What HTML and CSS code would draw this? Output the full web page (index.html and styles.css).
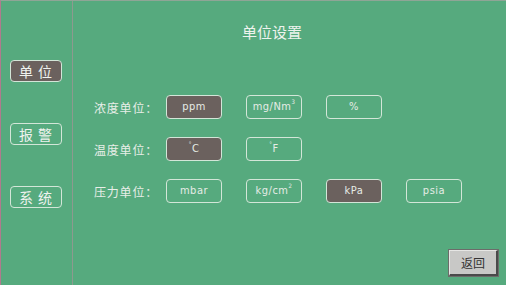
FILE: index.html
```html
<!DOCTYPE html>
<html lang="zh">
<head>
<meta charset="utf-8">
<link rel="stylesheet" href="styles.css">
</head>
<body>
<div class="screen">
  <nav class="side">
    <div class="nav-btn active">单&nbsp;位</div>
    <div class="nav-btn">报&nbsp;警</div>
    <div class="nav-btn">系&nbsp;统</div>
  </nav>
  <main class="main">
    <h1 class="title">单位设置</h1>
    <div class="rows">
      <div class="row">
        <span class="label">浓度单位：</span>
        <span class="opt sel">ppm</span>
        <span class="opt">mg/Nm<sup>3</sup></span>
        <span class="opt">%</span>
      </div>
      <div class="row">
        <span class="label">温度单位：</span>
        <span class="opt sel"><sup>°</sup>C</span>
        <span class="opt"><sup>°</sup>F</span>
      </div>
      <div class="row">
        <span class="label">压力单位：</span>
        <span class="opt">mbar</span>
        <span class="opt">kg/cm<sup>2</sup></span>
        <span class="opt sel">kPa</span>
        <span class="opt">psia</span>
      </div>
    </div>
    <div class="footer">
      <div class="back">返回</div>
    </div>
  </main>
</div>
</body>
</html>
```
FILE: styles.css
```css
html, body {
  margin: 0;
  padding: 0;
}
body {
  width: 506px;
  height: 285px;
  overflow: hidden;
  background: #56aa7e;
  font-family: "Noto Sans CJK SC", "Liberation Sans", sans-serif;
}
.screen {
  display: flex;
  height: 285px;
  box-sizing: border-box;
  border-left: 1px solid #b07a8e;
  border-top: 1px solid #8fa596;
}
.side {
  width: 72px;
  flex: none;
  border-right: 1px solid #8d9a8f;
  display: flex;
  flex-direction: column;
  align-items: flex-start;
  padding-top: 59px;
  padding-left: 9px;
  box-sizing: border-box;
  gap: 41px;
}
.nav-btn {
  width: 50px;
  height: 20px;
  border: 1px solid #d3e6d8;
  border-radius: 4px;
  color: #eef2ee;
  font-size: 14px;
  line-height: 20px;
  text-align: center;
  letter-spacing: 1px;
}
.nav-btn.active {
  background: #6b615e;
}
.main {
  flex: 1;
  display: flex;
  flex-direction: column;
}
.title {
  margin: 21px 0 0 169px;
  font-size: 15px;
  font-weight: normal;
  color: #eef3ee;
  line-height: 20px;
}
.rows {
  margin-top: 53px;
  padding-left: 21px;
  display: flex;
  flex-direction: column;
  gap: 18px;
}
.row {
  display: flex;
  align-items: center;
  gap: 24px;
  height: 24px;
}
.label {
  width: 48px;
  font-size: 12px;
  letter-spacing: 0.8px;
  color: #e8eee8;
  white-space: nowrap;
}
.opt {
  width: 54px;
  height: 22px;
  border: 1px solid #d3e6d8;
  border-radius: 4px;
  color: #e6ece6;
  font-family: "DejaVu Sans Condensed", "Liberation Sans", sans-serif;
  font-size: 11px;
  line-height: 22px;
  text-align: center;
  letter-spacing: 0.5px;
}
.opt.sel {
  background: #6b615e;
}
.opt sup {
  font-size: 6px;
  vertical-align: 6px;
  line-height: 0;
}
.footer {
  margin-top: auto;
  display: flex;
  justify-content: flex-end;
  padding: 0 8px 9px 0;
}
.back {
  width: 46px;
  height: 23px;
  background: #c8c8c6;
  border: 1px solid #e6e6e4;
  border-right: 2px solid #4a4a4a;
  border-bottom: 2px solid #4a4a4a;
  box-shadow: 0 0 0 1px #6c6c6a;
  color: #333333;
  font-size: 12px;
  line-height: 23px;
  text-align: center;
}
```
